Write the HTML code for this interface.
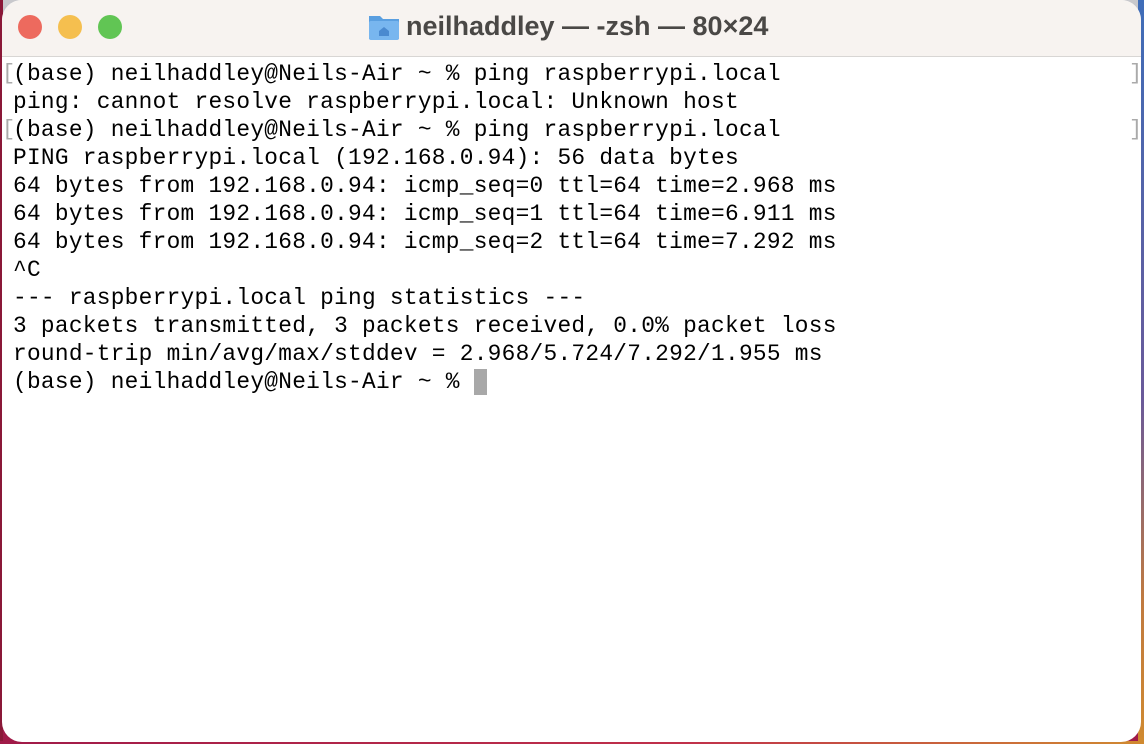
<!DOCTYPE html>
<html><head><meta charset="utf-8"><style>
html,body{margin:0;padding:0;width:1144px;height:744px;overflow:hidden;}
body{background:linear-gradient(90deg,#8a1838 0 3px,transparent 3px),linear-gradient(180deg,#c8c8cc 0,#c0c0c4 500px,#a01a48 500px);position:relative;}
.bgr{position:absolute;right:0;top:0;width:6px;height:744px;background:linear-gradient(180deg,#3f6db8 0,#6a5a9a 400px,#c07a40 600px,#d08a30 100%);}
.bgb{position:absolute;left:0;bottom:0;width:1144px;height:3px;background:linear-gradient(90deg,#a01a48,#c0304a 60%,#d08a30);}
.win{position:absolute;left:2px;top:0;width:1139px;height:742px;background:#fff;border-radius:20px;overflow:hidden;}
.tb{position:absolute;left:0;top:0;width:100%;height:56px;background:#f7f3f0;border-bottom:1px solid #d8d6d4;}
.dot{position:absolute;top:15px;width:24px;height:24px;border-radius:50%;}
.title{position:absolute;left:366px;top:9px;font:bold 27px "Liberation Sans",sans-serif;color:#4a4846;white-space:nowrap;}
.title span{position:absolute;left:38px;top:2px;}
.term{position:absolute;left:11px;top:60px;font:22.8px/28px "Liberation Mono",monospace;letter-spacing:0.28px;color:#000;white-space:pre;}
.br{position:absolute;color:#aaa;font:22px/28px "Liberation Mono",monospace;}
.cur{position:absolute;left:472px;top:369px;width:13px;height:26px;background:#a8a8a8;}
</style></head><body>
<div class="bgr"></div><div class="bgb"></div>
<div class="win">
<div class="tb">
<div class="dot" style="left:16px;background:#ed6a5e"></div>
<div class="dot" style="left:56px;background:#f5bf4f"></div>
<div class="dot" style="left:96px;background:#61c554"></div>
<div class="title">
<svg width="32" height="28" viewBox="0 0 32 28" style="position:absolute;left:0;top:4px"><path d="M1 3h11l3 3h16v20H1z" fill="#5a9fe0"/><rect x="1" y="8" width="30" height="19" rx="2" fill="#78b6ef"/><path d="M11 18l5-4 5 4v5h-10z" fill="#4a8ad0"/></svg>
<span>neilhaddley — -zsh — 80×24</span></div>
</div>
<div class="br" style="left:0;top:60px">[</div><div class="br" style="left:0;top:116px">[</div>
<div class="br" style="left:1127px;top:60px">]</div><div class="br" style="left:1127px;top:116px">]</div>
<div class="term">(base) neilhaddley@Neils-Air ~ % ping raspberrypi.local
ping: cannot resolve raspberrypi.local: Unknown host
(base) neilhaddley@Neils-Air ~ % ping raspberrypi.local
PING raspberrypi.local (192.168.0.94): 56 data bytes
64 bytes from 192.168.0.94: icmp_seq=0 ttl=64 time=2.968 ms
64 bytes from 192.168.0.94: icmp_seq=1 ttl=64 time=6.911 ms
64 bytes from 192.168.0.94: icmp_seq=2 ttl=64 time=7.292 ms
^C
--- raspberrypi.local ping statistics ---
3 packets transmitted, 3 packets received, 0.0% packet loss
round-trip min/avg/max/stddev = 2.968/5.724/7.292/1.955 ms
(base) neilhaddley@Neils-Air ~ % </div>
<div class="cur"></div>
</div>
</body></html>
